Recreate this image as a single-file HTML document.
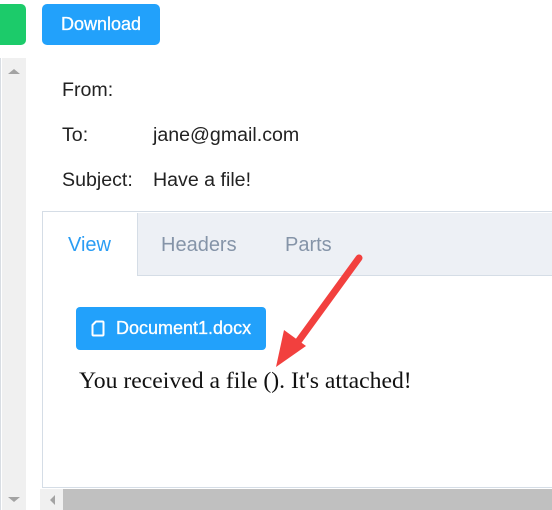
<!DOCTYPE html>
<html><head><style>
body{margin:0;width:552px;height:510px;overflow:hidden;background:#fff;font-family:"Liberation Sans",sans-serif;position:relative}
.a{position:absolute}
.lbl{position:absolute;font-size:19.6px;color:#222}
</style></head><body>
<div class="a" style="left:-6px;top:4px;width:32px;height:41px;background:#1ccb6a;border-radius:5px"></div>
<div class="a" style="left:42px;top:4px;width:118px;height:41px;background:#22a1fb;border-radius:5px;color:#fff;font-size:18px;line-height:41px;text-align:center;-webkit-text-stroke:0.3px #fff">Download</div>
<div class="a" style="left:0;top:58px;width:1px;height:452px;background:#d8dde3"></div>
<div class="a" style="left:2px;top:58px;width:24px;height:452px;background:#f0f0f0"></div>
<div class="a" style="left:8px;top:69px;width:0;height:0;border-left:6px solid transparent;border-right:6px solid transparent;border-bottom:5px solid #a3a3a3"></div>
<div class="a" style="left:8px;top:497px;width:0;height:0;border-left:6px solid transparent;border-right:6px solid transparent;border-top:5px solid #a3a3a3"></div>
<div class="lbl" style="left:62px;top:79px">From:</div>
<div class="lbl" style="left:62px;top:124px">To:</div>
<div class="lbl" style="left:153px;top:124px">jane@gmail.com</div>
<div class="lbl" style="left:62px;top:169px">Subject:</div>
<div class="lbl" style="left:153px;top:169px">Have a file!</div>
<div class="a" style="left:42px;top:211px;width:520px;height:277px;border:1px solid #d5dde6;box-sizing:border-box"></div>
<div class="a" style="left:137px;top:213px;width:415px;height:62px;background:#edf0f5;border-left:1px solid #d5dde6;border-bottom:1px solid #d5dde6"></div>
<div class="a" style="left:68px;top:234px;font-size:20px;color:#2a9df4">View</div>
<div class="a" style="left:161px;top:234px;font-size:20px;color:#8594a8">Headers</div>
<div class="a" style="left:285px;top:234px;font-size:20px;color:#8594a8">Parts</div>
<div class="a" style="left:76px;top:307px;width:190px;height:43px;background:#22a1fb;border-radius:4px;color:#fff;font-size:18px;line-height:43px;-webkit-text-stroke:0.3px #fff">
<svg class="a" style="left:15px;top:13px" width="14" height="17" viewBox="0 0 14 17"><path d="M5 1.5H11.5a1 1 0 0 1 1 1V14.5a1 1 0 0 1-1 1H2.5a1 1 0 0 1-1-1V5Z" fill="none" stroke="#fff" stroke-width="2" stroke-linejoin="round"/></svg>
<span class="a" style="left:40px;top:0">Document1.docx</span></div>
<div class="a" style="left:79px;top:368px;font-family:'Liberation Serif',serif;font-size:23.7px;color:#111">You received a file (). It's attached!</div>
<svg class="a" style="left:0;top:0" width="552" height="510"><line x1="359" y1="258" x2="292" y2="350" stroke="#f2403e" stroke-width="7" stroke-linecap="round"/><polygon points="276,367 284,330 306,346" fill="#f2403e"/></svg>
<div class="a" style="left:40px;top:489px;width:23px;height:21px;background:#f0f0f0"></div>
<div class="a" style="left:50px;top:495px;width:0;height:0;border-top:5px solid transparent;border-bottom:5px solid transparent;border-right:5px solid #a3a3a3"></div>
<div class="a" style="left:63px;top:489px;width:489px;height:21px;background:#c0c0c0"></div>
</body></html>
